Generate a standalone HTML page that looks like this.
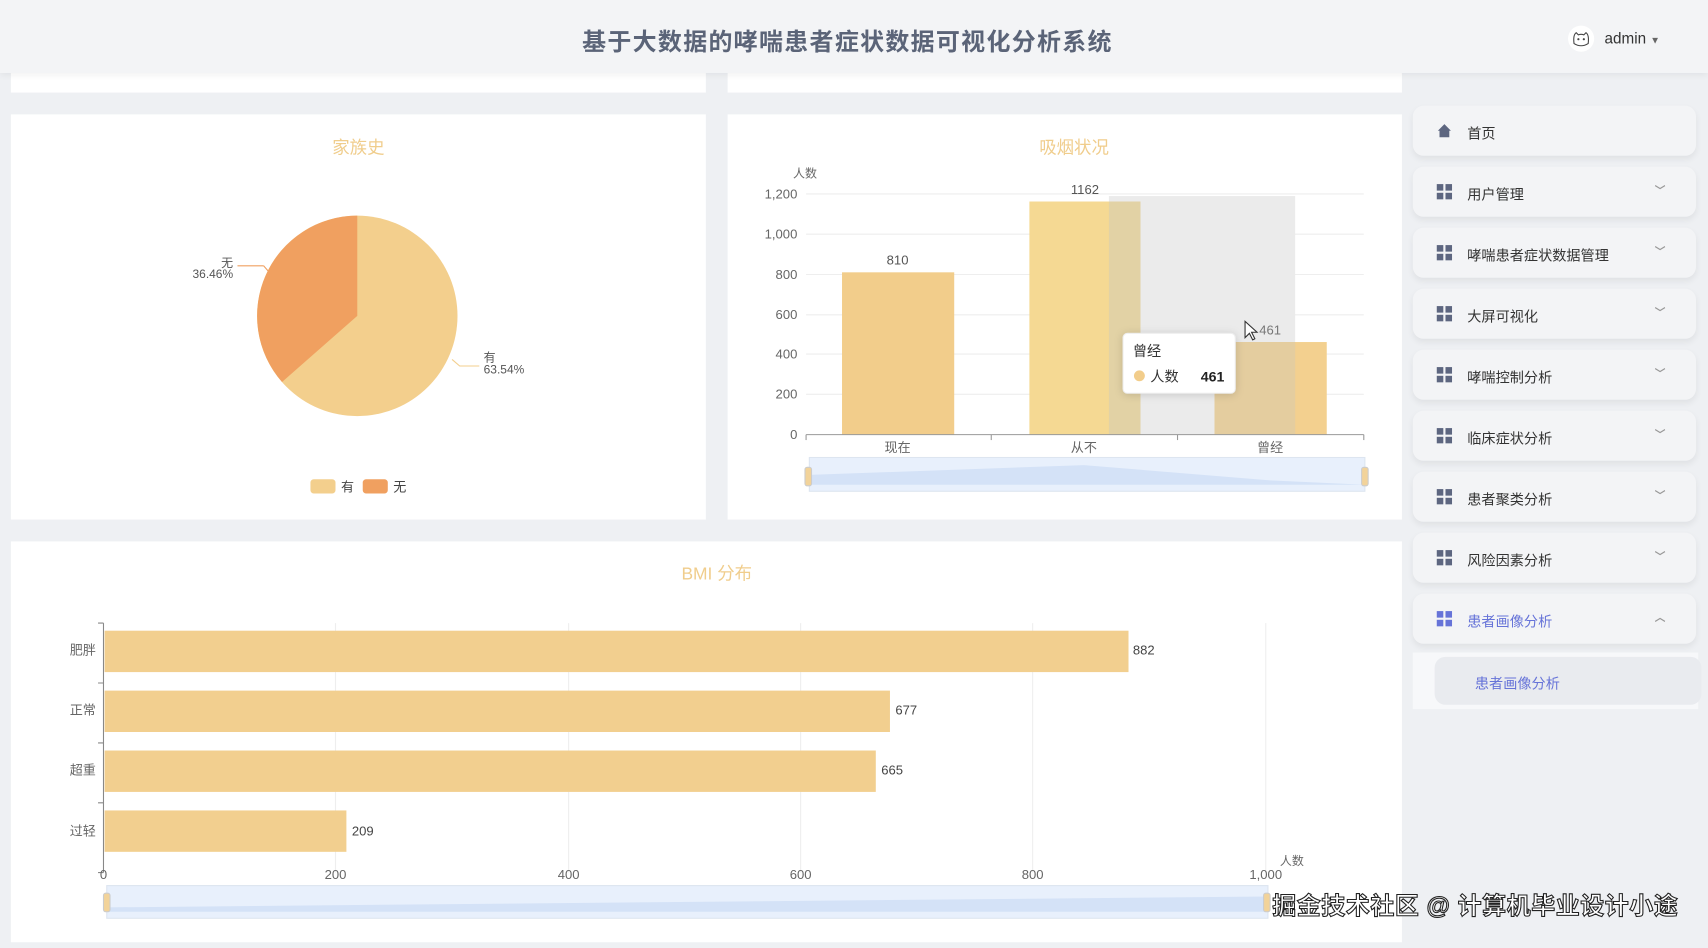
<!DOCTYPE html>
<html><head><meta charset="utf-8"><style>
*{margin:0;padding:0;box-sizing:border-box}
html,body{width:1708px;height:942px;overflow:hidden;background:#eef0f3;font-family:"Liberation Sans","Noto Sans CJK SC",sans-serif}
#w{position:absolute;left:0;top:0;width:1568px;height:865px;transform:scale(1.08929);transform-origin:0 0;background:#eef0f3}
.hd{position:absolute;left:0;top:0;width:1568px;height:67px;background:#f3f4f6;box-shadow:0 2px 6px rgba(0,0,0,.06);z-index:2}
.hd h1{position:absolute;left:0;width:1556px;top:21px;text-align:center;font-size:22px;letter-spacing:1.2px;font-weight:bold;color:#5b6478}
.card{position:absolute;background:#fff}
.nav{position:absolute;left:1297px;width:260px;height:46px;background:#f3f4f6;border-radius:10px;box-shadow:0 3px 6px rgba(0,0,0,.06);font-size:13px;color:#333}
.nav .ic{position:absolute;left:22px;top:16px;width:14px;height:14px}
.nav span{position:absolute;left:50px;top:15px}
.nav .ar{position:absolute;right:28px;top:13px;font-size:10px;color:#999}
.sq{display:grid;grid-template-columns:6px 6px;gap:2px}
.sq i{width:6px;height:6px;background:#5d6680}
svg text{font-family:"Liberation Sans","Noto Sans CJK SC",sans-serif}
</style></head><body><div id="w">
<div class="hd"><h1>基于大数据的哮喘患者症状数据可视化分析系统</h1>
<svg style="position:absolute;left:1439px;top:23px" width="25" height="25" viewBox="0 0 25 25"><circle cx="12.5" cy="12.5" r="12" fill="#fff"/><path d="M6 17 Q5 9 8 7 L10 9 Q12.5 8 15 9 L17 7 Q20 9 19 17 Q12.5 21 6 17 Z" fill="none" stroke="#444" stroke-width="1"/><circle cx="10" cy="13" r="1" fill="#444"/><circle cx="15" cy="13" r="1" fill="#444"/></svg>
<div style="position:absolute;left:1473px;top:27px;font-size:14px;color:#333">admin <span style="font-size:9px;color:#666">▼</span></div></div>
<div class="card" style="left:10px;top:60px;width:638px;height:25px"></div>
<div class="card" style="left:668px;top:60px;width:619px;height:25px"></div>

<div class="card" style="left:10px;top:105px;width:638px;height:372px">
<svg width="638" height="372">
<text x="319" y="36" text-anchor="middle" font-size="16" fill="#f0cd8c">家族史</text>
<circle cx="318" cy="185" r="92" fill="#f3cf8d"/>
<path d="M318 185 L318 93 A92 92 0 0 0 248.9 245.7 Z" fill="#f0a060"/>
<path d="M232 139 L208 139 M232 139 L238 146" stroke="#f0a060" fill="none"/>
<text x="204" y="140" text-anchor="end" font-size="11" fill="#555">无</text>
<text x="204" y="150" text-anchor="end" font-size="11" fill="#555">36.46%</text>
<path d="M405 225 L412 231 L430 231" stroke="#f3cf8d" fill="none"/>
<text x="434" y="227" font-size="11" fill="#555">有</text>
<text x="434" y="238" font-size="11" fill="#555">63.54%</text>
<rect x="275" y="335" width="23" height="13" rx="3" fill="#f3cf8d"/><text x="303" y="346" font-size="12" fill="#444">有</text>
<rect x="323" y="335" width="23" height="13" rx="3" fill="#f0a060"/><text x="351" y="346" font-size="12" fill="#444">无</text>
</svg></div>

<div class="card" style="left:668px;top:105px;width:619px;height:372px">
<svg width="619" height="372" font-size="12" fill="#666">
<text x="318" y="36" text-anchor="middle" font-size="16" fill="#f0cd8c">吸烟状况</text>
<text x="60" y="58" font-size="11" fill="#666">人数</text>
<g stroke="#eee"><line x1="72" y1="73" x2="584" y2="73"/><line x1="72" y1="110" x2="584" y2="110"/><line x1="72" y1="147" x2="584" y2="147"/><line x1="72" y1="184" x2="584" y2="184"/><line x1="72" y1="220" x2="584" y2="220"/><line x1="72" y1="257" x2="584" y2="257"/></g>
<g text-anchor="end" font-size="12"><text x="64" y="77">1,200</text><text x="64" y="114">1,000</text><text x="64" y="151">800</text><text x="64" y="188">600</text><text x="64" y="224">400</text><text x="64" y="261">200</text><text x="64" y="298">0</text></g>
<rect x="350" y="75" width="171" height="219" fill="#ebebeb"/>
<rect x="105" y="145" width="103" height="149" fill="#f2cd8b"/>
<rect x="277" y="80" width="102" height="214" fill="#f5d993"/>
<rect x="350" y="80" width="29" height="214" fill="#e2d2a5"/>
<rect x="447" y="209" width="103" height="85" fill="#f3d08f"/>
<rect x="447" y="209" width="74" height="85" fill="#e4cd9f"/>
<line x1="72" y1="294" x2="584" y2="294" stroke="#999"/>
<g stroke="#999"><line x1="72" y1="294" x2="72" y2="299"/><line x1="242" y1="294" x2="242" y2="299"/><line x1="413" y1="294" x2="413" y2="299"/><line x1="584" y1="294" x2="584" y2="299"/></g>
<g text-anchor="middle" font-size="12"><text x="156" y="138" fill="#555">810</text><text x="328" y="73" fill="#555">1162</text><text x="498" y="202" fill="#777">461</text>
<text x="156" y="310">现在</text><text x="327" y="310">从不</text><text x="498" y="310">曾经</text></g>
<rect x="75" y="315" width="510" height="31" fill="#e8f0fc" stroke="#dde5f0"/>
<path d="M75 340 L75 331 L327 322 L498 336 L585 340 Z" fill="#d4e2f7"/>
<rect x="71" y="324" width="6" height="17" rx="2" fill="#f2d39a" stroke="#ccc"/><rect x="582" y="324" width="6" height="17" rx="2" fill="#f2d39a" stroke="#ccc"/>
<path d="M475 190 l0 15 l4 -4 l3 6 l2 -1 l-3 -6 l5 0 z" fill="#fff" stroke="#333"/>
<rect x="363" y="201" width="103" height="55" rx="4" fill="#fff" stroke="#eee" style="filter:drop-shadow(0 1px 4px rgba(0,0,0,.15))"/>
<text x="372" y="222" font-size="13" fill="#333">曾经</text>
<circle cx="378" cy="240" r="5" fill="#f2cd8b"/>
<text x="388" y="245" font-size="13" fill="#333">人数</text>
<text x="456" y="245" font-size="13" font-weight="bold" text-anchor="end" fill="#222">461</text>
</svg></div>

<div class="card" style="left:10px;top:497px;width:1277px;height:368px">
<svg width="1277" height="368" font-size="12" fill="#666">
<text x="648" y="35" text-anchor="middle" font-size="16" fill="#f0cd8c">BMI 分布</text>
<g stroke="#eee"><line x1="298" y1="75" x2="298" y2="304"/><line x1="512" y1="75" x2="512" y2="304"/><line x1="725" y1="75" x2="725" y2="304"/><line x1="938" y1="75" x2="938" y2="304"/><line x1="1152" y1="75" x2="1152" y2="304"/></g>
<line x1="85" y1="75" x2="85" y2="304" stroke="#888"/>
<g stroke="#888"><line x1="80" y1="75" x2="85" y2="75"/><line x1="80" y1="130" x2="85" y2="130"/><line x1="80" y1="185" x2="85" y2="185"/><line x1="80" y1="240" x2="85" y2="240"/><line x1="80" y1="304" x2="85" y2="304"/></g>
<g fill="#f2cf8f"><rect x="86" y="82" width="940" height="38"/><rect x="86" y="137" width="721" height="38"/><rect x="86" y="192" width="708" height="38"/><rect x="86" y="247" width="222" height="38"/></g>
<g text-anchor="end"><text x="78" y="104">肥胖</text><text x="78" y="159">正常</text><text x="78" y="214">超重</text><text x="78" y="270">过轻</text></g>
<g fill="#444"><text x="1030" y="104">882</text><text x="812" y="159">677</text><text x="799" y="214">665</text><text x="313" y="270">209</text></g>
<g text-anchor="middle"><text x="85" y="310">0</text><text x="298" y="310">200</text><text x="512" y="310">400</text><text x="725" y="310">600</text><text x="938" y="310">800</text><text x="1152" y="310">1,000</text></g>
<text x="1165" y="297" font-size="11">人数</text>
<rect x="88" y="316" width="1066" height="30" fill="#e8f0fc" stroke="#dde5f0"/>
<path d="M88 340 L88 336 L1154 326 L1154 340 Z" fill="#d4e2f7"/>
<rect x="85" y="323" width="6" height="17" rx="2" fill="#f2d39a" stroke="#ccc"/><rect x="1150" y="323" width="6" height="17" rx="2" fill="#f2d39a" stroke="#ccc"/>
</svg></div>

<div class="nav" style="top:97px"><svg class="ic" viewBox="0 0 14 14"><path d="M7 1 L1 7 L2.5 7 L2.5 13 L11.5 13 L11.5 7 L13 7 Z" fill="#5d6680"/></svg><span>首页</span></div>
<div class="nav" style="top:153px"><div class="ic sq"><i></i><i></i><i></i><i></i></div><span>用户管理</span><b class="ar">﹀</b></div>
<div class="nav" style="top:209px"><div class="ic sq"><i></i><i></i><i></i><i></i></div><span>哮喘患者症状数据管理</span><b class="ar">﹀</b></div>
<div class="nav" style="top:265px"><div class="ic sq"><i></i><i></i><i></i><i></i></div><span>大屏可视化</span><b class="ar">﹀</b></div>
<div class="nav" style="top:321px"><div class="ic sq"><i></i><i></i><i></i><i></i></div><span>哮喘控制分析</span><b class="ar">﹀</b></div>
<div class="nav" style="top:377px"><div class="ic sq"><i></i><i></i><i></i><i></i></div><span>临床症状分析</span><b class="ar">﹀</b></div>
<div class="nav" style="top:433px"><div class="ic sq"><i></i><i></i><i></i><i></i></div><span>患者聚类分析</span><b class="ar">﹀</b></div>
<div class="nav" style="top:489px"><div class="ic sq"><i></i><i></i><i></i><i></i></div><span>风险因素分析</span><b class="ar">﹀</b></div>
<div class="nav" style="top:545px;color:#6673d8"><div class="ic sq"><i style="background:#6673d8"></i><i style="background:#6673d8"></i><i style="background:#6673d8"></i><i style="background:#6673d8"></i></div><span>患者画像分析</span><b class="ar">︿</b></div>
<div style="position:absolute;left:1297px;top:599px;width:262px;height:52px;background:#f7f8fa"></div>
<div style="position:absolute;left:1317px;top:603px;width:245px;height:44px;background:#e9ebef;border-radius:10px;font-size:13px;color:#6673d8;padding:14px 0 0 37px">患者画像分析</div>
<div style="position:absolute;left:1168px;top:814px;font-size:22px;color:#fff;font-weight:bold;-webkit-text-stroke:1px #222;letter-spacing:0.5px">掘金技术社区 @ 计算机毕业设计小途</div>
</div></body></html>
